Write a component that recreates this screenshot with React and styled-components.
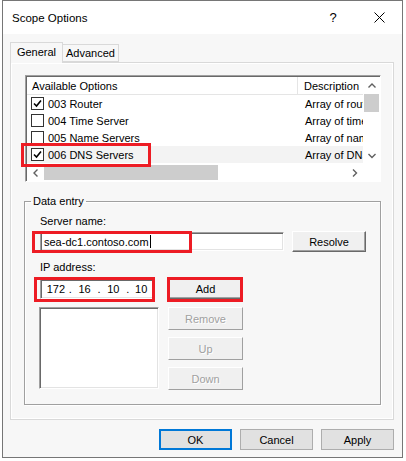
import React from 'react';
import styled, { createGlobalStyle } from 'styled-components';

const Global = createGlobalStyle`
  * { box-sizing: border-box; }
  body {
    margin: 0;
    background: #fff;
    font-family: "Liberation Sans", Arial, sans-serif;
    font-size: 11px;
    color: #000;
  }
`;

const Stage = styled.div`
  position: relative;
  width: 406px;
  height: 461px;
`;

const Window = styled.div`
  display: flex;
  flex-direction: column;
  width: 401px;
  height: 458px;
  margin-left: 2px;
  border: 1px solid #767676;
  background: #f7f7f7;
`;

const TitleBar = styled.div`
  display: flex;
  align-items: center;
  height: 33px;
  padding-left: 9px;
  background: #fff;
  font-size: 11.5px;
`;

const TitleText = styled.span`
  flex: 1;
`;

const TitleButton = styled.span`
  display: flex;
  align-items: center;
  justify-content: center;
  width: 46px;
  height: 33px;
  font-size: 13px;
`;

const Body = styled.div`
  display: flex;
  flex-direction: column;
  flex: 1;
  padding: 8px 8px 0 7px;
`;

const TabRow = styled.div`
  display: flex;
  align-items: flex-end;
  height: 20px;
  position: relative;
  z-index: 1;
`;

const Tab = styled.div`
  display: flex;
  align-items: center;
  justify-content: center;
  height: ${p => (p.active ? 21 : 18)}px;
  width: ${p => (p.active ? 53 : 56)}px;
  margin-bottom: ${p => (p.active ? -1 : 0)}px;
  padding-bottom: ${p => (p.active ? 2 : 0)}px;
  border: 1px solid #d9d9d9;
  border-bottom: ${p => (p.active ? 'none' : '1px solid #d9d9d9')};
  border-left: ${p => (p.active ? '1px solid #d9d9d9' : 'none')};
  background: #f7f7f7;
`;

const Panel = styled.div`
  display: flex;
  flex-direction: column;
  height: 358px;
  padding: 12px 0 0 13px;
  border: 1px solid #d9d9d9;
  box-shadow: inset 1px 1px 0 #fff, inset -1px -1px 0 #fff;
`;

const Sunken = styled.div`
  border: 1px solid;
  border-color: #a0a0a0 #fff #fff #a0a0a0;
  box-shadow: inset 1px 1px 0 #696969, inset -1px -1px 0 #e3e3e3;
  background: #fff;
`;

const ListView = styled(Sunken)`
  display: flex;
  flex-direction: column;
  width: 356px;
  height: 107px;
  margin-left: 1px;
  padding: 1px 0 0 1px;
`;

const ListTop = styled.div`
  display: flex;
  flex: 1;
  min-height: 0;
`;

const Columns = styled.div`
  flex: 1;
  overflow: hidden;
`;

const HeaderRow = styled.div`
  display: flex;
  height: 18px;
  border-bottom: 1px solid #e5e5e5;
`;

const HeaderCell = styled.div`
  display: flex;
  align-items: center;
  flex: 0 0 ${p => p.w}px;
  padding-left: ${p => p.pad}px;
  border-right: ${p => (p.sep ? '1px solid #e5e5e5' : 'none')};
  white-space: nowrap;
  overflow: hidden;
`;

const Row = styled.div`
  display: flex;
  height: 17px;
  background: ${p => (p.hot ? '#f3f3f3' : 'transparent')};
`;

const Cell = styled.div`
  display: flex;
  align-items: center;
  gap: 4px;
  flex: 0 0 ${p => p.w}px;
  padding-left: ${p => p.pad}px;
  white-space: nowrap;
  overflow: hidden;
`;

const Box = styled.span`
  display: flex;
  align-items: center;
  justify-content: center;
  width: 13px;
  height: 13px;
  border: 1px solid #333;
  background: #fff;
`;

const VScroll = styled.div`
  display: flex;
  flex-direction: column;
  width: 17px;
  background: #fff;
`;

const HScroll = styled.div`
  display: flex;
  height: 17px;
  background: #fff;
`;

const Arrow = styled.div`
  display: flex;
  align-items: center;
  justify-content: center;
  flex: 0 0 17px;
  height: 17px;
`;

const VThumb = styled.div`
  height: 18px;
  background: #cdcdcd;
  margin: 0 1px;
`;

const Track = styled.div`
  flex: 1;
`;

const HThumb = styled.div`
  width: 174px;
  height: 15px;
  margin-top: 1px;
  background: #cdcdcd;
`;

const GroupBox = styled.fieldset`
  width: 357px;
  height: 210px;
  margin: 13px 0 0 0;
  padding: 0;
  border: 1px solid #a0a0a0;
  box-shadow: 1px 1px 0 #fff, inset 1px 1px 0 #fff;
`;

const Legend = styled.legend`
  margin-left: 6px;
  padding: 0 2px;
  line-height: 13px;
`;

const GroupInner = styled.div`
  display: flex;
  flex-direction: column;
  padding-left: 15px;
`;

const Label = styled.div`
  line-height: 13px;
  margin-top: ${p => p.top}px;
`;

const FieldRow = styled.div`
  display: flex;
  align-items: ${p => p.align || 'center'};
  gap: ${p => p.gap}px;
  margin-top: ${p => p.top}px;
`;

const TextBox = styled(Sunken)`
  display: flex;
  align-items: center;
  width: ${p => p.w}px;
  height: ${p => p.h}px;
  padding-left: ${p => p.pad || 3}px;
`;

const Caret = styled.span`
  display: inline-block;
  width: 1px;
  height: 13px;
  margin-left: 1px;
  background: #000;
`;

const IpPart = styled.span`
  width: ${p => p.w}px;
  text-align: center;
`;

const ClassicButton = styled.div`
  display: flex;
  align-items: center;
  justify-content: center;
  width: ${p => p.w}px;
  height: ${p => p.h}px;
  background: #f0f0f0;
  border: 1px solid;
  border-color: #fff ${p => (p.disabled ? '#a0a0a0' : '#696969')} ${p => (p.disabled ? '#a0a0a0' : '#696969')} #fff;
  box-shadow: ${p => (p.disabled ? 'none' : 'inset -1px -1px 0 #a0a0a0')};
  color: ${p => (p.disabled ? '#a0a0a0' : '#000')};
  text-shadow: ${p => (p.disabled ? '1px 1px 0 #fff' : 'none')};
`;

const ButtonStack = styled.div`
  display: flex;
  flex-direction: column;
  gap: 7px;
`;

const ListBox = styled(Sunken)`
  width: 120px;
  height: 82px;
  margin-left: -1px;
`;

const Footer = styled.div`
  display: flex;
  justify-content: flex-end;
  gap: 8px;
  margin-top: 9px;
`;

const DialogButton = styled.div`
  display: flex;
  align-items: center;
  justify-content: center;
  width: 73px;
  height: 21px;
  background: #e1e1e1;
  border: ${p => (p.primary ? '2px solid #0078d7' : '1px solid #adadad')};
`;

const Mark = styled.div`
  position: absolute;
  left: ${p => p.x}px;
  top: ${p => p.y}px;
  width: ${p => p.w}px;
  height: ${p => p.h}px;
  border: 3px solid #ed1c24;
  pointer-events: none;
`;

const Check = () => (
  <svg width="9" height="9" viewBox="0 0 9 9">
    <path d="M1 4.5 L3.5 7 L8 1.5" fill="none" stroke="#000" strokeWidth="1.6" />
  </svg>
);

const Chevron = ({ dir }) => {
  const paths = {
    up: 'M0.5 4.5 L4 1 L7.5 4.5',
    down: 'M0.5 1 L4 4.5 L7.5 1',
    left: 'M4.5 0.5 L1 4 L4.5 7.5',
    right: 'M1 0.5 L4.5 4 L1 7.5',
  };
  const horiz = dir === 'left' || dir === 'right';
  return (
    <svg width={horiz ? 6 : 8} height={horiz ? 8 : 6} viewBox={horiz ? '0 0 6 8' : '0 0 8 6'}>
      <path d={paths[dir]} fill="none" stroke="#606060" strokeWidth="1.4" />
    </svg>
  );
};

const options = [
  { name: '003 Router', desc: 'Array of router addresses', checked: true },
  { name: '004 Time Server', desc: 'Array of time servers', checked: false },
  { name: '005 Name Servers', desc: 'Array of name servers', checked: false },
  { name: '006 DNS Servers', desc: 'Array of DNS servers', checked: true, hot: true },
];

export default function App() {
  return (
    <Stage>
      <Global />
      <Window>
        <TitleBar>
          <TitleText>Scope Options</TitleText>
          <TitleButton>?</TitleButton>
          <TitleButton>
            <svg width="11" height="11" viewBox="0 0 11 11">
              <path d="M0.5 0.5 L10.5 10.5 M10.5 0.5 L0.5 10.5" stroke="#000" strokeWidth="1" />
            </svg>
          </TitleButton>
        </TitleBar>
        <Body>
          <TabRow>
            <Tab active>General</Tab>
            <Tab>Advanced</Tab>
          </TabRow>
          <Panel>
            <ListView>
              <ListTop>
                <Columns>
                  <HeaderRow>
                    <HeaderCell w={271} pad={5} sep>Available Options</HeaderCell>
                    <HeaderCell w={80} pad={6}>Description</HeaderCell>
                  </HeaderRow>
                  {options.map(o => (
                    <Row key={o.name} hot={o.hot}>
                      <Cell w={272} pad={4}>
                        <Box>{o.checked && <Check />}</Box>
                        {o.name}
                      </Cell>
                      <Cell w={80} pad={6}>{o.desc}</Cell>
                    </Row>
                  ))}
                </Columns>
                <VScroll>
                  <Arrow><Chevron dir="up" /></Arrow>
                  <VThumb />
                  <Track />
                  <Arrow><Chevron dir="down" /></Arrow>
                </VScroll>
              </ListTop>
              <HScroll>
                <Arrow><Chevron dir="left" /></Arrow>
                <HThumb />
                <Track />
                <Arrow><Chevron dir="right" /></Arrow>
                <Arrow />
              </HScroll>
            </ListView>
            <GroupBox>
              <Legend>Data entry</Legend>
              <GroupInner>
                <Label top={7}>Server name:</Label>
                <FieldRow top={3} gap={8}>
                  <TextBox w={244} h={19}>
                    sea-dc1.contoso.com<Caret />
                  </TextBox>
                  <ClassicButton w={74} h={21}>Resolve</ClassicButton>
                </FieldRow>
                <Label top={9}>IP address:</Label>
                <FieldRow top={4} gap={14}>
                  <TextBox w={114} h={20} pad={2}>
                    <IpPart w={26}>172</IpPart>.
                    <IpPart w={26}>16</IpPart>.
                    <IpPart w={26}>10</IpPart>.
                    <IpPart w={24}>10</IpPart>
                  </TextBox>
                  <ClassicButton w={75} h={21}>Add</ClassicButton>
                </FieldRow>
                <FieldRow top={8} gap={9} align="flex-start">
                  <ListBox />
                  <ButtonStack>
                    <ClassicButton w={75} h={23} disabled>Remove</ClassicButton>
                    <ClassicButton w={75} h={23} disabled>Up</ClassicButton>
                    <ClassicButton w={75} h={23} disabled>Down</ClassicButton>
                  </ButtonStack>
                </FieldRow>
              </GroupInner>
            </GroupBox>
          </Panel>
          <Footer>
            <DialogButton primary>OK</DialogButton>
            <DialogButton>Cancel</DialogButton>
            <DialogButton>Apply</DialogButton>
          </Footer>
        </Body>
      </Window>
      <Mark x={21} y={143} w={130} h={24} />
      <Mark x={32} y={231} w={160} h={22} />
      <Mark x={34} y={277} w={121} h={25} />
      <Mark x={167} y={277} w={76} h={25} />
    </Stage>
  );
}
